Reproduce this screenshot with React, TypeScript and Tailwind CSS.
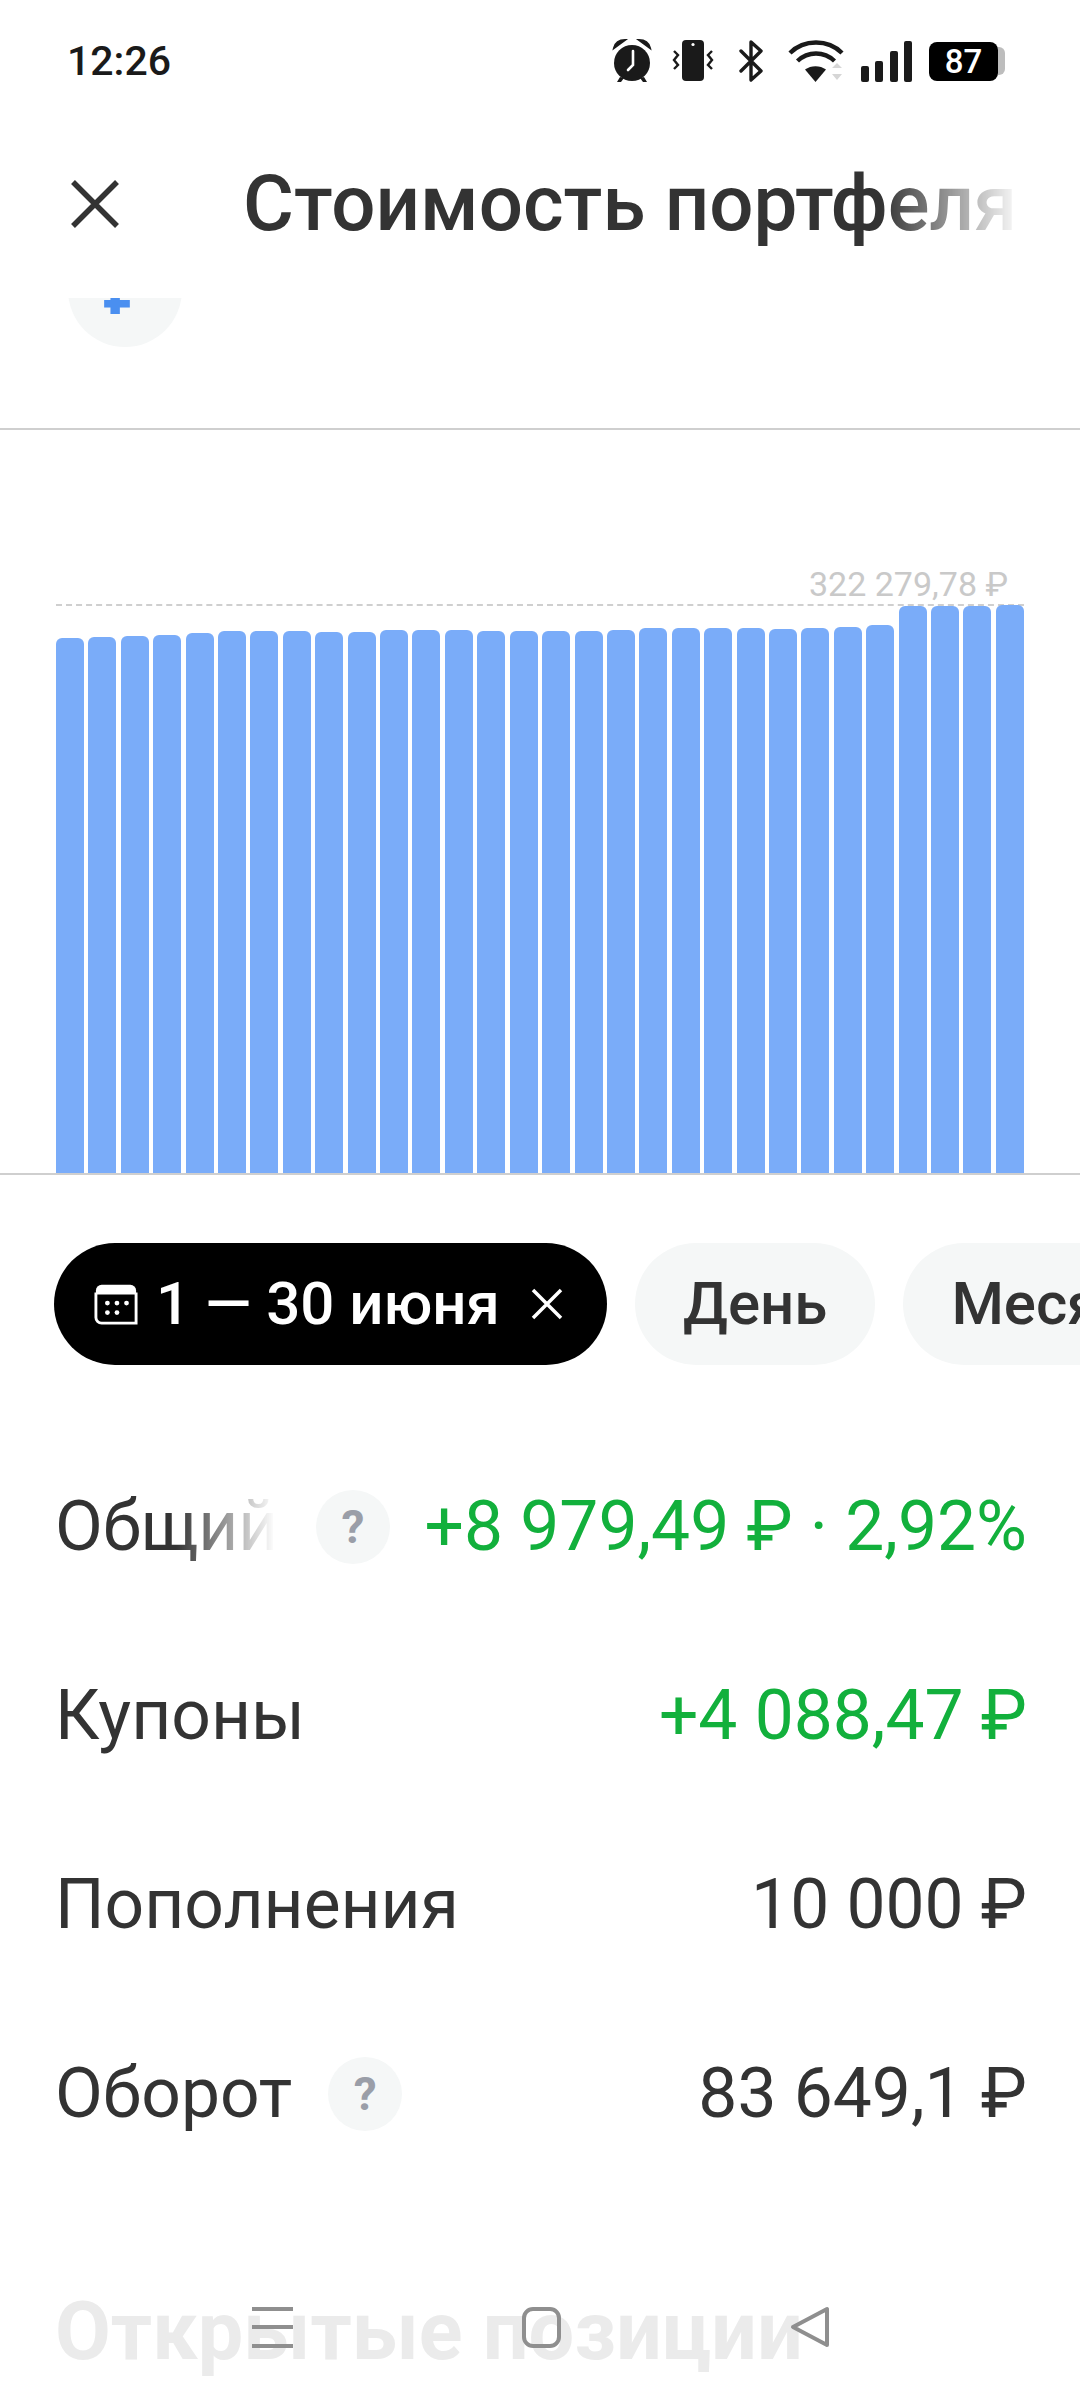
const tops = [638,637,636,635,633,631,631,631,632,632,630,630,630,631,631,631,631,630,628,628,628,628,629,628,627,625,606,606,606,605];
const CHART_BOTTOM = 1173;

function StatusIcons() {
  return (
    <div className="flex items-center">
      <svg width="40" height="44" viewBox="0 0 40 44" fill="#1a1a1a">
        <circle cx="20" cy="24" r="18" />
        <path d="M2 9 Q4 1 13 1 L2 9Z M38 9 Q36 1 27 1 L38 9Z" stroke="#1a1a1a" strokeWidth="2" />
        <path d="M8 38l-3 5h4l3-4zM32 38l3 5h-4l-3-4z" />
        <path d="M21 12v14l-5 5" fill="none" stroke="#fff" strokeWidth="2.6" strokeLinecap="round" />
      </svg>
      <svg width="42" height="42" viewBox="0 0 42 42" className="ml-[20px]" fill="#1a1a1a">
        <rect x="10" y="0" width="22" height="41" rx="4" />
        <circle cx="21" cy="4.5" r="1.6" fill="#fff" />
        <path d="M2 11l4 4-4 5 4 5-4 4M40 11l-4 4 4 5-4 5 4 4" fill="none" stroke="#1a1a1a" strokeWidth="2.4" />
      </svg>
      <svg width="24" height="42" viewBox="0 0 24 42" className="ml-[25px]" fill="none" stroke="#1a1a1a" strokeWidth="3.4" strokeLinejoin="round" strokeLinecap="round">
        <path d="M2 11l20 20-10 9V2l10 9L2 31" />
      </svg>
      <svg width="56" height="42" viewBox="0 0 56 42" className="ml-[25px]">
        <path d="M2 13C16 -1 40 -1 54 13" fill="none" stroke="#1a1a1a" strokeWidth="4.4" />
        <path d="M9.5 21C20 11 36 11 46.5 21" fill="none" stroke="#1a1a1a" strokeWidth="4.4" />
        <path d="M17 28.500L27.500 41 38 28.500C32 24 23 24 17 28.500Z" transform="translate(0 1)" fill="#1a1a1a" />
        <path d="M44 28l5-5 5 5zM44 34l5 6 5-6z" fill="#d6d6d6" />
      </svg>
      <svg width="52" height="42" viewBox="0 0 52 42" className="ml-[17px]" fill="#1a1a1a">
        <rect x="0" y="26" width="8" height="16" rx="2" />
        <rect x="14" y="21" width="8" height="21" rx="2" />
        <rect x="29" y="11" width="8" height="31" rx="2" />
        <rect x="43" y="1" width="8" height="41" rx="2" />
      </svg>
      <div className="ml-[16px] flex items-center">
        <div className="flex h-[39px] w-[69px] items-center justify-center rounded-[8px] bg-black text-[33px] font-medium leading-none text-white">87</div>
        <div className="h-[28px] w-[7px] rounded-r-[6px] bg-[#bdbdbd]" />
      </div>
    </div>
  );
}

function Help() {
  return (
    <div className="flex h-[74px] w-[74px] shrink-0 items-center justify-center rounded-full bg-[#f5f7f7] text-[46px] font-bold leading-none text-[#9a9ea8]">?</div>
  );
}

function Row({ label, value, green, help, fade }: { label: string; value: string; green?: boolean; help?: boolean; fade?: boolean }) {
  return (
    <div className="flex h-[189px] items-center justify-between">
      <div className="flex items-center">
        <span className={fade ? "mr-[41px] w-[220px] overflow-hidden whitespace-nowrap [mask-image:linear-gradient(90deg,black_55%,transparent_100%)]" : help ? "mr-[36px]" : ""}>{label}</span>
        {help && <Help />}
      </div>
      <span className={green ? "text-[#12b03c]" : ""}>{value}</span>
    </div>
  );
}

export default function App() {
  return (
    <div className="relative flex h-[2400px] w-[1080px] flex-col overflow-hidden bg-white font-['Roboto',sans-serif] text-[#333333]">
      <div className="flex h-[122px] items-center justify-between pl-[67px] pr-[75px]">
        <span className="text-[41px] font-medium leading-none text-[#1a1a1a]">12:26</span>
        <StatusIcons />
      </div>
      <div className="flex h-[176px] items-center pb-[12px] pl-[71px]">
        <svg width="48" height="48" viewBox="0 0 48 48" fill="none" stroke="#333333" strokeWidth="5.500">
          <path d="M2 2l44 44M46 2L2 46" />
        </svg>
        <span className="ml-[124px] w-[778px] overflow-hidden whitespace-nowrap text-[78px] font-medium leading-[110px] [mask-image:linear-gradient(90deg,black_82%,transparent_100%)]">Стоимость портфеля</span>
      </div>
      <div className="flex-1 overflow-hidden">
        <div className="ml-[68px] mt-[-65px] flex h-[114px] w-[114px] items-center justify-center rounded-full bg-[#f5f7f7] pt-[6px] text-[64px] font-bold leading-none text-[#4a8ff0]">₽</div>
        <div className="mt-[81px] h-[2px] bg-[#cfcfcf]" />
        <div className="relative flex h-[743px] items-end justify-between pl-[56px] pr-[56px]">
          <div className="absolute left-[56px] right-[56px] top-[174px] border-t-[2px] border-dashed border-[#cfcfcf]" />
          <span className="absolute right-[72px] top-[134px] text-[34px] leading-[40px] text-[#c9c9c9]">322 279,78 ₽</span>
          {tops.map((t, i) => (
            <div key={i} className="relative w-[28px] rounded-t-[6px] bg-[#7aacf9]" style={{ height: CHART_BOTTOM - t }} />
          ))}
        </div>
        <div className="h-[2px] bg-[#cfcfcf]" />
        <div className="mt-[68px] flex items-center gap-[28px] pl-[54px] text-[60px] font-medium leading-none">
          <div className="flex h-[122px] w-[553px] shrink-0 items-center rounded-full bg-black pl-[40px] text-white">
            <svg width="44" height="44" viewBox="0 0 46 44" fill="none">
              <path d="M2 12V8a6 6 0 0 1 6-6h30a6 6 0 0 1 6 6v4z" fill="#fff" />
              <path d="M2 10v26a6 6 0 0 0 6 6h36V10" stroke="#fff" strokeWidth="3" />
              <g fill="#fff"><circle cx="14" cy="21" r="2.500" /><circle cx="24" cy="21" r="2.500" /><circle cx="34" cy="21" r="2.500" /><circle cx="14" cy="31" r="2.500" /><circle cx="24" cy="31" r="2.500" /></g>
            </svg>
            <span className="ml-[18px] whitespace-nowrap">1 — 30 июня</span>
            <svg width="32" height="32" viewBox="0 0 32 32" className="ml-[31px]" fill="none" stroke="#fff" strokeWidth="3.500">
              <path d="M2 2l28 28M30 2L2 30" />
            </svg>
          </div>
          <div className="flex h-[122px] shrink-0 items-center justify-center rounded-full bg-[#f5f7f7] px-[48px]">День</div>
          <div className="flex h-[122px] shrink-0 items-center justify-center rounded-full bg-[#f5f7f7] px-[48px]">Месяц</div>
        </div>
        <div className="mt-[67px] pl-[55px] pr-[53px] text-[69.5px] leading-none">
          <Row label="Общий" value="+8 979,49 ₽ · 2,92%" green help fade />
          <Row label="Купоны" value="+4 088,47 ₽" green />
          <Row label="Пополнения" value="10 000 ₽" />
          <Row label="Оборот" value="83 649,1 ₽" help />
        </div>
        <div className="mt-[103px] pl-[55px] text-[81px] font-bold leading-none text-[#ebebeb]">Открытые позиции</div>
      </div>
      <div className="absolute bottom-[52px] left-[252px] flex w-[578px] items-center justify-between">
        <div className="flex h-[41px] w-[41px] flex-col justify-between">
          <div className="h-[4px] bg-[#8f8f8f]" />
          <div className="h-[4px] bg-[#8f8f8f]" />
          <div className="h-[4px] bg-[#8f8f8f]" />
        </div>
        <div className="h-[41px] w-[39px] rounded-[11px] border-[4px] border-[#8f8f8f]" />
        <svg width="40" height="42" viewBox="0 0 40 42" fill="none" stroke="#8f8f8f" strokeWidth="4" strokeLinejoin="round">
          <path d="M37 3v36L3 21z" />
        </svg>
      </div>
    </div>
  );
}
